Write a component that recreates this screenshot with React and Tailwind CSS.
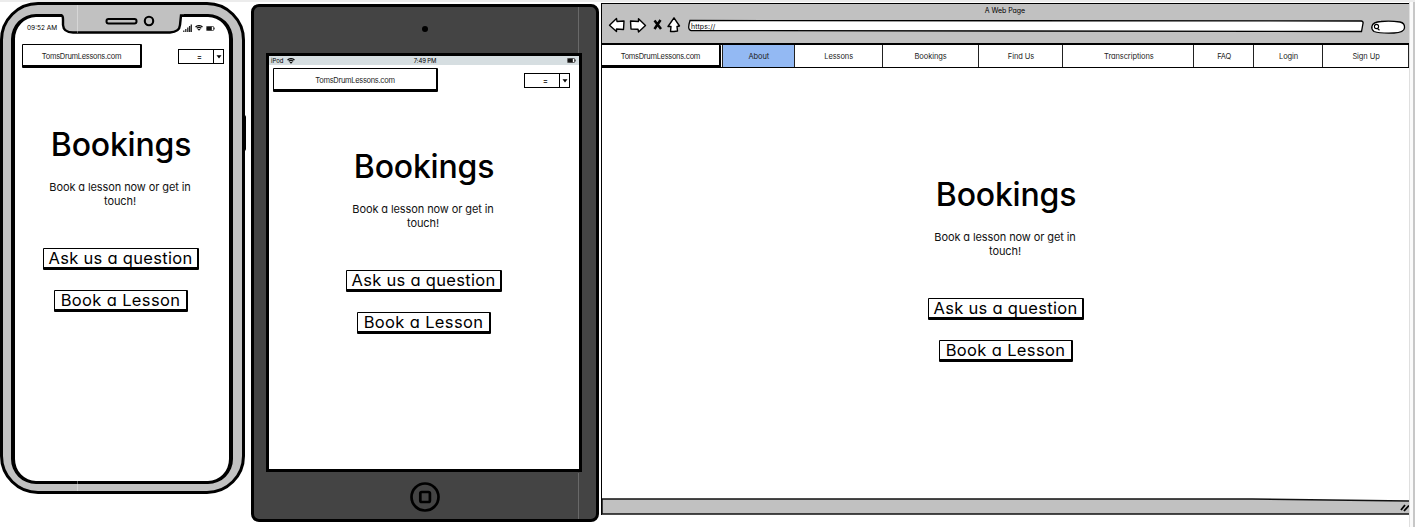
import React from "react";

const NAV = [
  { label: "About", cell: "w-[73px] bg-[#93b9f3]" },
  { label: "Lessons", cell: "w-[88px]" },
  { label: "Bookings", cell: "w-[96px]" },
  { label: "Find Us", cell: "w-[85px]" },
  { label: "Transcriptions", cell: "w-[131px]" },
  { label: "FAQ", cell: "w-[60px]" },
  { label: "Login", cell: "w-[69px]" },
  { label: "Sign Up", cell: "w-[86px]" },
];

function Brand({ className }) {
  return (
    <div
      className={`flex items-center justify-center rounded-[1px] border-t border-r-2 border-b-[3px] border-l border-black bg-white pt-[3px] text-[7.5px] leading-none tracking-[-0.32px] text-[#222] ${className}`}
    >
      TomsDrumLessons.com
    </div>
  );
}

function MenuSelect() {
  return (
    <div className="flex h-[15px] w-[46px] border border-black bg-white">
      <div className="flex flex-1 items-center justify-center pl-[7px]">
        <span className="text-[8px] leading-none">=</span>
      </div>
      <div className="flex w-[10px] items-center justify-center border-l border-black">
        <svg width="6" height="4" viewBox="0 0 6 4">
          <path d="M0.5 0.2H5.5L3 3.6Z" />
        </svg>
      </div>
    </div>
  );
}

function Wifi() {
  return (
    <svg width="8" height="6" viewBox="0 0 8 6" fill="none" stroke="#111" strokeWidth="1.3">
      <path d="M0.5 2Q4-0.8 7.5 2M1.7 3.3Q4 1.6 6.3 3.3" />
      <path d="M2.4 4.2Q4 3.3 5.6 4.2L4 5.8Z" fill="#111" stroke="none" />
    </svg>
  );
}

function Battery() {
  return (
    <svg width="9" height="5" viewBox="0 0 9 5">
      <rect x="0.4" y="0.4" width="7.2" height="4.2" rx="0.8" fill="#fff" stroke="#222" strokeWidth="0.8" />
      <rect x="1" y="0.8" width="4.8" height="3.4" fill="#111" />
      <path d="M8.3 1.6V3.4" stroke="#222" strokeWidth="0.8" />
    </svg>
  );
}

function Action({ children, className }) {
  return (
    <button
      className={`flex h-[22px] items-center justify-center rounded-[1px] border-t border-r-2 border-b-[3px] border-l border-black bg-white text-[16.5px] leading-none whitespace-nowrap ${className}`}
    >
      {children}
    </button>
  );
}

function Hero() {
  return (
    <div className="flex w-[156px] flex-col items-center pt-[1px]">
      <h1 className="h-8 text-[32px] leading-8 font-medium tracking-[-0.2px] whitespace-nowrap">Bookings</h1>
      <p className="mt-[19px] w-[156px] pr-[2px] text-center text-[11px] leading-[14px] tracking-[-0.1px] text-[#111]">
        Book a lesson now or get in
        <br />
        touch!
      </p>
      <Action className="mt-[40px] w-[156px] tracking-[0.3px]">Ask us a question</Action>
      <Action className="mt-5 w-[134px] tracking-[0.36px]">Book a Lesson</Action>
    </div>
  );
}

function Phone() {
  return (
    <section className="relative mt-[2px] h-[492px] w-[245px] shrink-0 rounded-[38px] border-[3px] border-black bg-[#c1c1c1] pt-[9px] pl-2">
      <div className="flex h-[470px] w-[222px] flex-col rounded-[25px] border-x-[4px] border-y-[3px] border-black bg-white">
        <div className="flex h-[27px] shrink-0 items-start justify-between pt-[7px] pr-[14px] pl-[12px]">
          <span className="pt-[1px] text-[6.5px] leading-none">09:52 AM</span>
          <div className="flex items-center gap-[3px]">
            <svg width="9" height="8" viewBox="0 0 9 8" stroke="#222" strokeWidth="1.3">
              <path d="M0.8 6.4V8M2.8 5V8M4.8 3.6V8M6.6 2V8M8.3 0.4V8" />
            </svg>
            <Wifi />
            <Battery />
          </div>
        </div>
        <div className="flex justify-between pr-[5px] pl-[7px]">
          <Brand className="h-[24px] w-[120px]" />
          <div className="pt-[5px]">
            <MenuSelect />
          </div>
        </div>
        <div className="mt-[60px] pl-[28px]">
          <Hero />
        </div>
      </div>
      <svg className="absolute top-[9px] left-[56px]" width="126" height="22" viewBox="59 14 126 22">
        <path
          d="M59 14.5H61Q63 15 63 19V25Q63.5 32.5 73 32.5H170Q179.500 32 180 25L181 15.500H184V12H59Z"
          fill="#c1c1c1"
        />
        <path
          d="M59 15H61Q63 15.500 63 19V25Q63.500 32.500 73 32.500H170Q179.500 32 180 25L181 15.500H185"
          fill="none"
          stroke="#000"
          strokeWidth="2.4"
        />
        <rect x="106.500" y="19" width="30" height="4.600" rx="2" fill="none" stroke="#000" strokeWidth="2" />
        <circle cx="149" cy="21" r="4.200" fill="none" stroke="#000" strokeWidth="2.100" />
      </svg>
      <div className="absolute top-[110px] -right-[4px] h-[36px] w-[4px] rounded-r-[2px] bg-black" />
      <div className="absolute top-0 left-[74px] h-[28px] w-px bg-white/35" />
      <div className="absolute bottom-0 left-[74px] h-[11px] w-px bg-white/35" />
    </section>
  );
}

function Tablet() {
  return (
    <section className="relative mt-[4px] ml-[6px] flex h-[518px] w-[348px] shrink-0 flex-col rounded-[8px] border-[3px] border-black bg-[#444]">
      <div className="flex h-[46px] shrink-0 items-center justify-center">
        <div className="mb-[3px] h-[6px] w-[6px] rounded-full bg-black" />
      </div>
      <div className="ml-[12px] h-[419px] w-[316px] shrink-0 border-[3px] border-black bg-white">
        <div className="grid h-[9px] grid-cols-3 items-center bg-[#d6dee1] pr-[3px] pl-[2px] text-[6px] leading-none">
          <div className="flex items-center gap-[3px]">
            <span>iPod</span>
            <Wifi />
          </div>
          <span className="pl-[3px] text-center tracking-[-0.15px]">7:49 PM</span>
          <div className="flex justify-end">
            <Battery />
          </div>
        </div>
        <div className="mt-[3px] flex justify-between pr-[9px] pl-[4px]">
          <Brand className="h-[24px] w-[165px]" />
          <div className="pt-[5px]">
            <MenuSelect />
          </div>
        </div>
        <div className="mt-[58px] pl-[77px]">
          <Hero />
        </div>
      </div>
      <div className="flex flex-1 items-center justify-center pt-[2px]">
        <svg width="30" height="30" viewBox="0 0 30 30" fill="none" stroke="#000" strokeWidth="2.700">
          <circle cx="15" cy="15" r="13.500" />
          <rect x="10.300" y="10" width="9.600" height="10" rx="1.500" />
        </svg>
      </div>
      <div className="absolute top-0 right-[17px] h-[46px] w-px bg-white/20" />
      <div className="absolute right-[17px] bottom-0 h-[46px] w-px bg-white/20" />
    </section>
  );
}

function BrowserWindow() {
  return (
    <section className="mt-[3px] ml-[2px] flex h-[512px] w-[808px] shrink-0 flex-col border-t border-l border-black bg-white">
      <header className="flex h-[41px] shrink-0 flex-col border-b-2 border-black bg-[#c1c1c1]">
        <div className="h-[12px] pt-[3px] pr-[1px] text-center text-[7px] leading-[8px] tracking-[-0.05px]">A Web Page</div>
        <div className="flex h-[24px] items-start">
          <svg width="86" height="20" viewBox="602 15 86 20" fill="#fff" stroke="#000" strokeWidth="1.400" strokeLinejoin="round">
            <path d="M609.500 24.300L616.500 17.500L617 20.500L624 20L623.500 28.500L616.500 28L616.500 30.500Z" />
            <path d="M645.500 24.500L638.500 17.700V20.500L630.500 20L631 28L638 28.200L638.500 31Z" />
            <path d="M654.500 19.500L661 28M660.500 19L654.500 28" fill="none" strokeWidth="2.500" />
            <path d="M674 16.800L679.500 25L677 25.500L677.500 30L674 30.500L670.500 30.500L671 25.500L668 25.500Z" />
          </svg>
          <div className="relative mt-[3px] h-[14px] w-[678px]">
            <svg className="absolute inset-0" width="678" height="14" viewBox="0 0 678 14">
              <path d="M2 1.500L673.500 2Q675.500 2.500 675 4.500L673.500 12.500L3 11.500Q-1 11 2 1.500Z" fill="#fff" stroke="#000" strokeWidth="1.300" />
            </svg>
            <span className="relative block pt-[3px] pl-[3px] text-[7px] leading-[9px] tracking-[0.1px]">https://</span>
          </div>
          <svg className="ml-[3px]" width="38" height="20" viewBox="1369 15 38 20">
            <path
              d="M1372 25Q1373 21 1381 20.500Q1390 19.500 1400 21Q1405 22 1404.500 27Q1404 31.500 1394 32Q1380 32.500 1374 30.500Q1371 28 1372 25Z"
              fill="#fff"
              stroke="#000"
              strokeWidth="1.300"
            />
            <circle cx="1376.500" cy="25.500" r="2.100" fill="none" stroke="#000" strokeWidth="1.100" />
            <path d="M1377.500 27.500L1379.500 29.300" stroke="#000" strokeWidth="1.200" />
          </svg>
        </div>
      </header>
      <nav className="flex h-[23px] shrink-0 border-b border-black text-[7.500px] leading-none tracking-[-0.1px] text-[#222]">
        <Brand className="h-[23px] w-[119px] border-t-0 border-b-[2px] border-l-0" />
        {NAV.map(({ label, cell }) => (
          <a key={label} className={`flex items-center justify-center border-r border-[#222] pt-[1px] pl-[1px] first-of-type:ml-px first-of-type:border-l ${cell}`}>
            {label}
          </a>
        ))}
      </nav>
      <main className="flex-1 pt-[110px] pl-[326px]">
        <Hero />
      </main>
      <footer className="relative flex h-[17px] shrink-0 justify-end">
        <svg width="807" height="17" viewBox="0 0 807 17" preserveAspectRatio="none">
          <path d="M0 1L650 1L808 3V16H0Z" fill="#c1c1c1" stroke="#111" strokeWidth="1.500" />
          <path d="M799 12L803 7M802 13L807 7.500" stroke="#000" strokeWidth="1.800" />
        </svg>
      </footer>
    </section>
  );
}

export default function App() {
  return (
    <div className="h-[527px] w-[1415px] overflow-hidden border-t-2 border-[#ececec] bg-white font-[Inter,sans-serif] text-black [font-feature-settings:'cv11']">
      <div className="-mt-[2px] flex h-[527px] items-start">
        <Phone />
        <Tablet />
        <BrowserWindow />
        <div className="mt-[2px] h-[525px] w-[6px] shrink-0 border-r-2 border-l border-r-[#c7c7c7] border-l-[#dfdfdf] bg-[#fafafa]" />
      </div>
    </div>
  );
}
